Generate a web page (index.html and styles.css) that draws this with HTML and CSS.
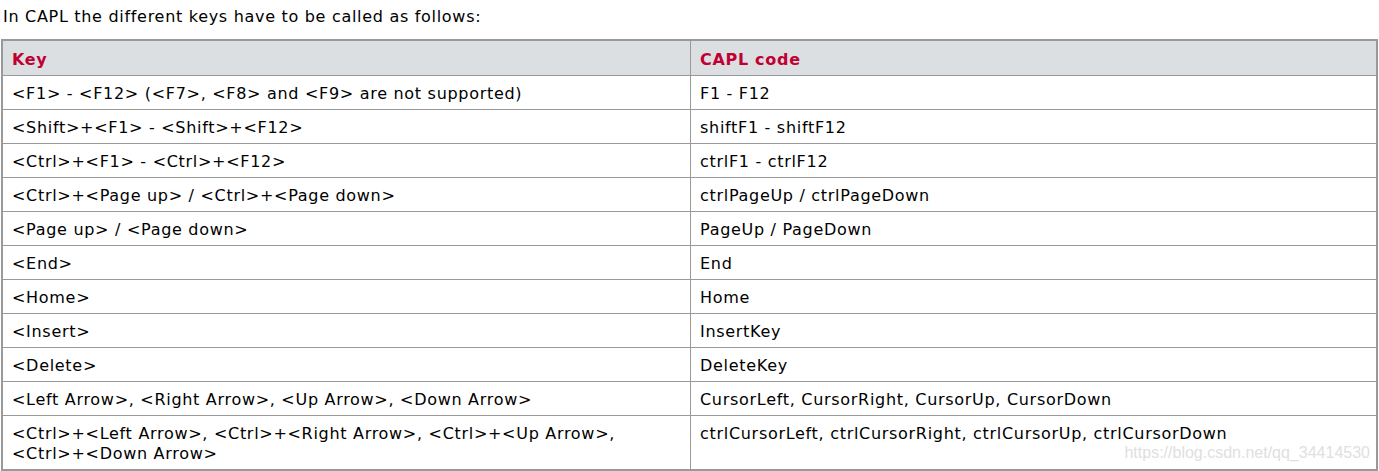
FILE: index.html
```html
<!DOCTYPE html>
<html>
<head>
<meta charset="utf-8">
<link rel="stylesheet" href="styles.css">
</head>
<body>
<div class="page">
  <p class="intro">In CAPL the different keys have to be called as follows:</p>
  <div class="wrap">
    <table class="keys">
      <thead>
        <tr><th class="c1">Key</th><th>CAPL code</th></tr>
      </thead>
      <tbody>
        <tr><td>&lt;F1&gt; - &lt;F12&gt; (&lt;F7&gt;, &lt;F8&gt; and &lt;F9&gt; are not supported)</td><td>F1 - F12</td></tr>
        <tr><td>&lt;Shift&gt;+&lt;F1&gt; - &lt;Shift&gt;+&lt;F12&gt;</td><td>shiftF1 - shiftF12</td></tr>
        <tr><td>&lt;Ctrl&gt;+&lt;F1&gt; - &lt;Ctrl&gt;+&lt;F12&gt;</td><td>ctrlF1 - ctrlF12</td></tr>
        <tr><td>&lt;Ctrl&gt;+&lt;Page up&gt; / &lt;Ctrl&gt;+&lt;Page down&gt;</td><td>ctrlPageUp / ctrlPageDown</td></tr>
        <tr><td>&lt;Page up&gt; / &lt;Page down&gt;</td><td>PageUp / PageDown</td></tr>
        <tr><td>&lt;End&gt;</td><td>End</td></tr>
        <tr><td>&lt;Home&gt;</td><td>Home</td></tr>
        <tr><td>&lt;Insert&gt;</td><td>InsertKey</td></tr>
        <tr><td>&lt;Delete&gt;</td><td>DeleteKey</td></tr>
        <tr><td>&lt;Left Arrow&gt;, &lt;Right Arrow&gt;, &lt;Up Arrow&gt;, &lt;Down Arrow&gt;</td><td>CursorLeft, CursorRight, CursorUp, CursorDown</td></tr>
        <tr><td>&lt;Ctrl&gt;+&lt;Left Arrow&gt;, &lt;Ctrl&gt;+&lt;Right Arrow&gt;, &lt;Ctrl&gt;+&lt;Up Arrow&gt;,<br>&lt;Ctrl&gt;+&lt;Down Arrow&gt;</td><td>ctrlCursorLeft, ctrlCursorRight, ctrlCursorUp, ctrlCursorDown</td></tr>
      </tbody>
    </table>
    <span class="watermark">https://blog.csdn.net/qq_34414530</span>
  </div>
</div>
</body>
</html>
```

FILE: styles.css
```css
html, body {
  margin: 0;
  padding: 0;
  background: #ffffff;
}
.page {
  padding: 0 1px 0 1px;
  font-family: "DejaVu Sans", Verdana, sans-serif;
  font-size: 16px;
  letter-spacing: 0.7px;
  color: #000000;
}
.intro {
  margin: 0;
  padding: 7px 0 0 2px;
  height: 39px;
  line-height: 20px;
  box-sizing: border-box;
}
.wrap {
  position: relative;
}
.keys {
  width: 100%;
  border-collapse: collapse;
  border: 2px solid #999999;
}
.keys th, .keys td {
  border: 1px solid #999999;
  padding: 8px 9px 5px 9px;
  line-height: 20px;
  text-align: left;
  vertical-align: top;
}
.keys th {
  background: #dcdfe2;
  color: #c00032;
  font-weight: bold;
  padding: 9px 9px 5px 9px;
}
.keys .c1 {
  width: 669px;
}
.watermark {
  position: absolute;
  right: 8px;
  bottom: 9px;
  font-family: "Liberation Sans", Arial, sans-serif;
  font-size: 16px;
  letter-spacing: 0;
  color: #e0e0e0;
}
```
